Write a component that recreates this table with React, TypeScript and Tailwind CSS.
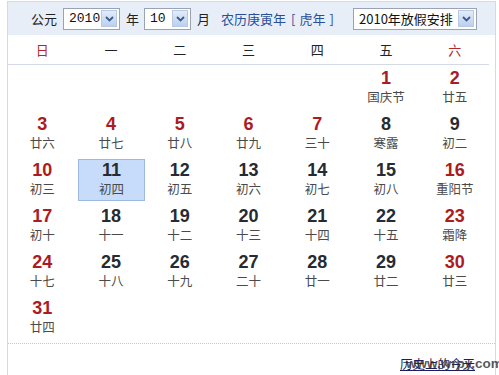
import React from "react";

type Day = { d: number; l: string; red?: boolean; sel?: boolean } | null;

const weeks: Day[][] = [
  [null, null, null, null, null, { d: 1, l: "国庆节", red: true }, { d: 2, l: "廿五", red: true }],
  [
    { d: 3, l: "廿六", red: true },
    { d: 4, l: "廿七", red: true },
    { d: 5, l: "廿八", red: true },
    { d: 6, l: "廿九", red: true },
    { d: 7, l: "三十", red: true },
    { d: 8, l: "寒露" },
    { d: 9, l: "初二" },
  ],
  [
    { d: 10, l: "初三", red: true },
    { d: 11, l: "初四", sel: true },
    { d: 12, l: "初五" },
    { d: 13, l: "初六" },
    { d: 14, l: "初七" },
    { d: 15, l: "初八" },
    { d: 16, l: "重阳节", red: true },
  ],
  [
    { d: 17, l: "初十", red: true },
    { d: 18, l: "十一" },
    { d: 19, l: "十二" },
    { d: 20, l: "十三" },
    { d: 21, l: "十四" },
    { d: 22, l: "十五" },
    { d: 23, l: "霜降", red: true },
  ],
  [
    { d: 24, l: "十七", red: true },
    { d: 25, l: "十八" },
    { d: 26, l: "十九" },
    { d: 27, l: "二十" },
    { d: 28, l: "廿一" },
    { d: 29, l: "廿二" },
    { d: 30, l: "廿三", red: true },
  ],
  [{ d: 31, l: "廿四", red: true }, null, null, null, null, null, null],
];

const weekdays = ["日", "一", "二", "三", "四", "五", "六"];

function Arrow() {
  return (
    <span className="flex h-[17px] w-[16px] items-center justify-center border border-[#b9c9e2] bg-gradient-to-b from-[#e3ecfa] to-[#bcd0ee]">
      <svg width="9" height="6" viewBox="0 0 9 6">
        <path d="M1 1 L4.5 4.5 L8 1" fill="none" stroke="#3b5a8c" strokeWidth="1.8" />
      </svg>
    </span>
  );
}

function Select({ value, width, mono }: { value: string; width: string; mono?: boolean }) {
  return (
    <div className={`flex h-[22px] items-center justify-between border border-[#9aa3b3] bg-white pl-[5px] pr-[2px] ${width}`}>
      <span
        className={`text-[13px] leading-none text-[#111] ${mono ? "font-['Liberation_Mono',monospace]" : ""}`}
      >
        {value}
      </span>
      <Arrow />
    </div>
  );
}

export default function App() {
  return (
    <div className="relative h-[375px] w-[499px] overflow-hidden bg-white font-['Noto_Sans_CJK_SC',sans-serif]">
      <div className="ml-[7px] mt-[1px] h-[374px] w-[489px] border-x border-t border-[#d3dae5]">
        <div className="flex h-[33px] items-center bg-[#e8eef7] pl-[23px] text-[13px] text-[#222]">
          <span>公元</span>
          <div className="ml-[6px]">
            <Select value="2010" width="w-[57px]" mono />
          </div>
          <span className="ml-[6px]">年</span>
          <div className="ml-[5px]">
            <Select value="10" width="w-[47px]" mono />
          </div>
          <span className="ml-[6px]">月</span>
          <span className="ml-[11px] text-[#2a4f9a]">
            农历庚寅年<span className="ml-[5px]">[</span>
            <span className="ml-[4px]">虎年</span>
            <span className="ml-[4px]">]</span>
          </span>
          <div className="ml-auto mr-[18px]">
            <Select value="2010年放假安排" width="w-[124px]" />
          </div>
        </div>

        <div className="grid h-[30px] w-[481px] grid-cols-7 items-center border-b border-[#d3dae5] text-[13px]">
          {weekdays.map((w, i) => (
            <div
              key={w}
              className={`text-center ${i === 0 || i === 6 ? "text-[#b02a2a]" : "text-[#222]"}`}
            >
              {w}
            </div>
          ))}
        </div>

        <div className="grid w-[481px] grid-cols-7 auto-rows-[46px]">
          {weeks.flat().map((c, i) => (
            <div key={i} className="flex">
              {c && (
                <div
                  className={`flex flex-1 flex-col items-center ${
                    c.sel
                      ? "my-[2px] ml-[1px] border border-[#9db9df] bg-[#c7dcfa] pt-[1px]"
                      : "pt-[4px]"
                  }`}
                >
                  <span
                    className={`font-['Liberation_Sans',Arial,sans-serif] text-[18px] font-bold leading-[19px] ${
                      c.red ? "text-[#aa1c22]" : "text-[#262b33]"
                    }`}
                  >
                    {c.d}
                  </span>
                  <span className="mt-[2px] text-[12.5px] leading-[14px] text-[#4a4a4a]">{c.l}</span>
                </div>
              )}
            </div>
          ))}
        </div>

        <div className="mt-[2px] border-t border-dotted border-[#c4c9d0]" />

        <div className="flex justify-end pr-[20px] pt-[12px]">
          <a className="text-[12.5px] leading-[15px] text-[#1b1f5e] underline">历史上的今天</a>
        </div>
      </div>

      <span className="pointer-events-none absolute left-[406px] top-[356px] font-['Liberation_Sans',Arial,sans-serif] text-[13.5px] font-bold leading-[16px] text-[#2b2b2b]/80">
        www.wrpy.com
      </span>
    </div>
  );
}
